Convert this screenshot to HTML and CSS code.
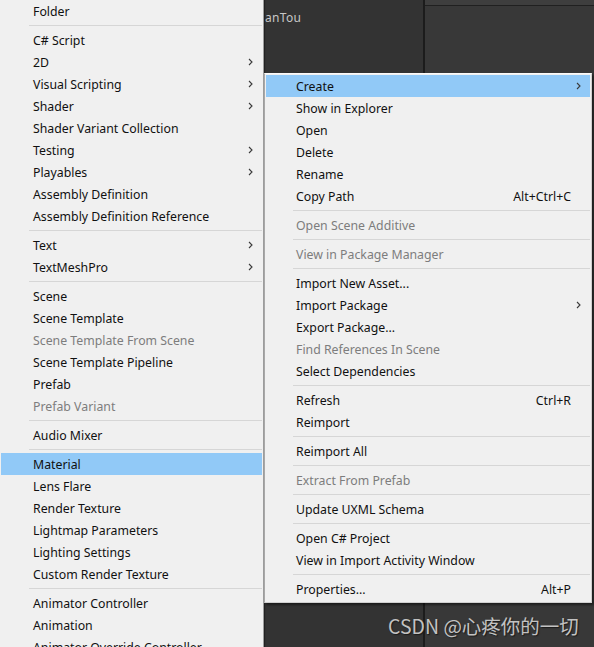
FILE: index.html
```html
<!DOCTYPE html>
<html>
<head>
<meta charset="utf-8">
<link rel="stylesheet" href="styles.css">
</head>
<body>
<div class="screen">
  <div class="panel panel-a"><span class="label">anTou</span></div>
  <div class="panel panel-b"><div class="tabstrip"></div></div>

  <ul class="menu menu-left">
    <li class="item">Folder</li>
    <li class="sep"></li>
    <li class="item">C# Script</li>
    <li class="item">2D<svg class="chev" viewBox="0 0 5 8"><path d="M1 1 L4 4 L1 7"/></svg></li>
    <li class="item">Visual Scripting<svg class="chev" viewBox="0 0 5 8"><path d="M1 1 L4 4 L1 7"/></svg></li>
    <li class="item">Shader<svg class="chev" viewBox="0 0 5 8"><path d="M1 1 L4 4 L1 7"/></svg></li>
    <li class="item">Shader Variant Collection</li>
    <li class="item">Testing<svg class="chev" viewBox="0 0 5 8"><path d="M1 1 L4 4 L1 7"/></svg></li>
    <li class="item">Playables<svg class="chev" viewBox="0 0 5 8"><path d="M1 1 L4 4 L1 7"/></svg></li>
    <li class="item">Assembly Definition</li>
    <li class="item">Assembly Definition Reference</li>
    <li class="sep"></li>
    <li class="item">Text<svg class="chev" viewBox="0 0 5 8"><path d="M1 1 L4 4 L1 7"/></svg></li>
    <li class="item">TextMeshPro<svg class="chev" viewBox="0 0 5 8"><path d="M1 1 L4 4 L1 7"/></svg></li>
    <li class="sep"></li>
    <li class="item">Scene</li>
    <li class="item">Scene Template</li>
    <li class="item off">Scene Template From Scene</li>
    <li class="item">Scene Template Pipeline</li>
    <li class="item">Prefab</li>
    <li class="item off">Prefab Variant</li>
    <li class="sep"></li>
    <li class="item">Audio Mixer</li>
    <li class="sep"></li>
    <li class="item hl">Material</li>
    <li class="item">Lens Flare</li>
    <li class="item">Render Texture</li>
    <li class="item">Lightmap Parameters</li>
    <li class="item">Lighting Settings</li>
    <li class="item">Custom Render Texture</li>
    <li class="sep"></li>
    <li class="item">Animator Controller</li>
    <li class="item">Animation</li>
    <li class="item">Animator Override Controller</li>
  </ul>

  <ul class="menu menu-right">
    <li class="item hl">Create<svg class="chev" viewBox="0 0 5 8"><path d="M1 1 L4 4 L1 7"/></svg></li>
    <li class="item">Show in Explorer</li>
    <li class="item">Open</li>
    <li class="item">Delete</li>
    <li class="item">Rename</li>
    <li class="item">Copy Path<span class="key">Alt+Ctrl+C</span></li>
    <li class="sep"></li>
    <li class="item off">Open Scene Additive</li>
    <li class="sep"></li>
    <li class="item off">View in Package Manager</li>
    <li class="sep"></li>
    <li class="item">Import New Asset...</li>
    <li class="item">Import Package<svg class="chev" viewBox="0 0 5 8"><path d="M1 1 L4 4 L1 7"/></svg></li>
    <li class="item">Export Package...</li>
    <li class="item off">Find References In Scene</li>
    <li class="item">Select Dependencies</li>
    <li class="sep"></li>
    <li class="item">Refresh<span class="key">Ctrl+R</span></li>
    <li class="item">Reimport</li>
    <li class="sep"></li>
    <li class="item">Reimport All</li>
    <li class="sep"></li>
    <li class="item off">Extract From Prefab</li>
    <li class="sep"></li>
    <li class="item">Update UXML Schema</li>
    <li class="sep"></li>
    <li class="item">Open C# Project</li>
    <li class="item">View in Import Activity Window</li>
    <li class="sep"></li>
    <li class="item">Properties...<span class="key">Alt+P</span></li>
  </ul>

  <div class="watermark">CSDN @心疼你的一切</div>
</div>
</body>
</html>
```

FILE: styles.css
```css
* { box-sizing: border-box; }
html, body { margin: 0; padding: 0; }
body {
  width: 594px;
  height: 647px;
  overflow: hidden;
  background: #333333;
  font-family: "Noto Sans", "Noto Sans CJK SC", sans-serif;
}
.screen {
  position: relative;
  width: 594px;
  height: 647px;
  overflow: hidden;
  display: grid;
  grid-template-columns: 425px 1fr;
}
.panel { height: 647px; }
.panel-a {
  background: #333333;
  border-right: 2px solid #1c1c1c;
  padding: 5px 0 0 265px;
}
.label {
  color: #c6c6c6;
  font-size: 12px;
  letter-spacing: 0.3px;
}
.panel-b { background: #383838; }
.tabstrip {
  height: 6px;
  background: #3e3e3e;
  border-bottom: 1px solid #202020;
}

.menu {
  list-style: none;
  margin: 0;
  position: absolute;
  background: #f0f0f0;
  font-size: 12.3px;
  color: #101010;
}
.menu-left {
  left: 0;
  top: 0;
  width: 264px;
  height: 680px;
  padding: 0 1px 0 1px;
  border-right: 1px solid #9c9c9c;
  box-shadow: 1px 0 1px rgba(0,0,0,0.35);
}
.menu-right {
  left: 264px;
  top: 73px;
  width: 328px;
  padding: 1px 1px 2px 1px;
  border: 1px solid #d0d0d0;
  border-left-color: #a8a8a8;
  border-top-color: #fafafa;
  box-shadow: 2px 2px 2px rgba(0,0,0,0.45);
}
.item {
  height: 22px;
  display: flex;
  align-items: center;
  padding: 0 9px 0 32px;
  white-space: nowrap;
}
.menu-right .item { padding-left: 30px; }
.item.off { color: #7d7d7d; }
.item.hl { background: #91c9f7; }
.sep {
  height: 7px;
  padding-top: 3px;
  margin-left: 28px;
}
.menu-right .sep { margin-left: 27px; }
.sep::before {
  content: "";
  display: block;
  height: 1px;
  background: #d6d6d6;
}
.chev {
  width: 5px;
  height: 8px;
  margin-left: auto;
  fill: none;
  stroke: #3a3a3a;
  stroke-width: 1.1;
}
.key {
  margin-left: auto;
  margin-right: 10px;
}

.watermark {
  position: absolute;
  left: 388px;
  top: 611px;
  font-family: "Noto Sans CJK SC", sans-serif;
  font-size: 19.5px;
  color: #c2c2c2;
  text-shadow: 1px 1px 1px #1a1a1a;
  white-space: nowrap;
}
```
